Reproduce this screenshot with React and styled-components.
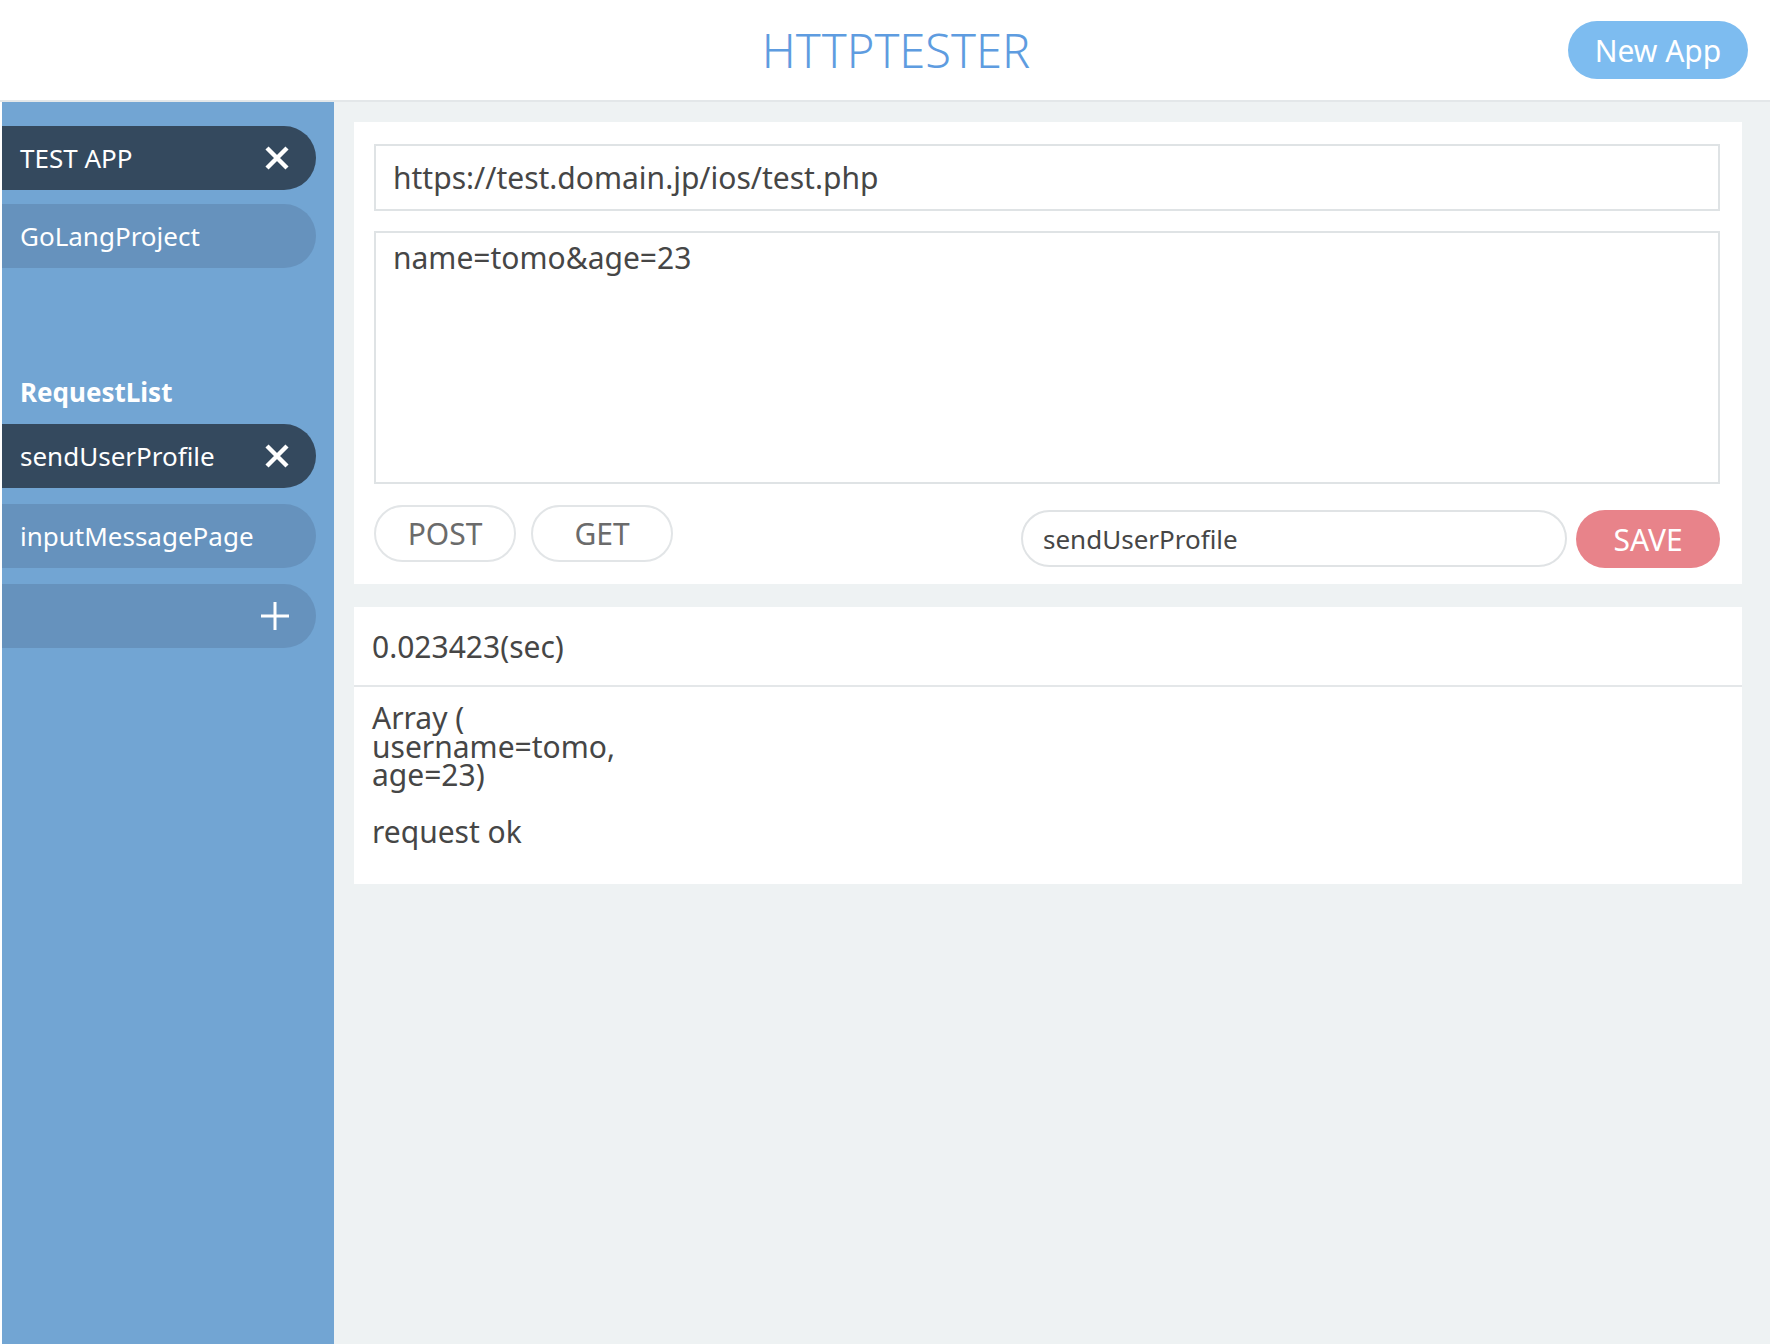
import React from 'react';
import styled, { createGlobalStyle } from 'styled-components';

const GlobalStyle = createGlobalStyle`
  * {
    box-sizing: border-box;
  }
  html,
  body {
    margin: 0;
    padding: 0;
  }
  body {
    font-family: "Noto Sans", "Noto Sans CJK JP", sans-serif;
    background: #fff;
    color: #464646;
  }
  button,
  input,
  textarea {
    font-family: inherit;
  }
`;

const apps = [
  { name: 'TEST APP', active: true },
  { name: 'GoLangProject', active: false },
];

const requests = [
  { name: 'sendUserProfile', active: true },
  { name: 'inputMessagePage', active: false },
];

const resultText = `Array (
username=tomo,
age=23)

request ok`;

const CloseIcon = () => (
  <svg width="26" height="26" viewBox="0 0 26 26">
    <path d="M3 3 L23 23 M23 3 L3 23" stroke="#fff" strokeWidth="4.4" fill="none" />
  </svg>
);

const PlusIcon = () => (
  <svg width="30" height="30" viewBox="0 0 30 30">
    <path d="M15 1 V29 M1 15 H29" stroke="#fff" strokeWidth="3" fill="none" />
  </svg>
);

const App = () => {
  return (
    <>
      <GlobalStyle />
      <Page>
        <Header>
          <Title>HTTPTESTER</Title>
          <NewAppButton>New App</NewAppButton>
        </Header>
        <Main>
          <Sidebar>
            <NavList $gap={14}>
              {apps.map((item) => (
                <Pill key={item.name} $active={item.active}>
                  <span>{item.name}</span>
                  {item.active && <CloseIcon />}
                </Pill>
              ))}
            </NavList>
            <SectionLabel>RequestList</SectionLabel>
            <NavList $gap={16}>
              {requests.map((item) => (
                <Pill key={item.name} $active={item.active}>
                  <span>{item.name}</span>
                  {item.active && <CloseIcon />}
                </Pill>
              ))}
              <AddPill>
                <PlusIcon />
              </AddPill>
            </NavList>
          </Sidebar>
          <Content>
            <EditorCard>
              <UrlInput readOnly defaultValue="https://test.domain.jp/ios/test.php" />
              <BodyArea readOnly defaultValue="name=tomo&age=23" />
              <ActionRow>
                <MethodButton>POST</MethodButton>
                <MethodButton>GET</MethodButton>
                <Spacer />
                <SaveGroup>
                  <NameInput readOnly defaultValue="sendUserProfile" />
                  <SaveButton>SAVE</SaveButton>
                </SaveGroup>
              </ActionRow>
            </EditorCard>
            <ResultCard>
              <TimeRow>0.023423(sec)</TimeRow>
              <ResultBody>{resultText}</ResultBody>
            </ResultCard>
          </Content>
        </Main>
      </Page>
    </>
  );
};
export default App;

const Page = styled.div`
  display: flex;
  flex-direction: column;
  height: 100vh;
`;

const Header = styled.header`
  display: grid;
  grid-template-columns: 1fr auto 1fr;
  align-items: center;
  height: 102px;
  padding: 0 22px;
  background: #fff;
  border-bottom: 2px solid #e3e7e9;
`;

const Title = styled.h1`
  grid-column: 2;
  margin: 0 0 0 22px;
  font-size: 47px;
  font-weight: 300;
  color: #5e9ce0;
  letter-spacing: 0;
`;

const NewAppButton = styled.button`
  justify-self: end;
  width: 180px;
  height: 58px;
  border: none;
  border-radius: 29px;
  background: #7dbcf0;
  color: #fff;
  font-size: 30px;
  padding: 0;
`;

const Main = styled.div`
  display: flex;
  flex: 1;
  min-height: 0;
  background: #fff;
`;

const Sidebar = styled.aside`
  display: flex;
  flex-direction: column;
  width: 332px;
  margin-left: 2px;
  padding: 24px 18px 0 0;
  background: #72a5d3;
`;

const NavList = styled.div`
  display: flex;
  flex-direction: column;
  gap: ${(p) => p.$gap}px;
`;

const Pill = styled.div`
  display: flex;
  align-items: center;
  justify-content: space-between;
  height: 64px;
  padding: 0 26px 0 18px;
  border-radius: 0 32px 32px 0;
  background: ${(p) => (p.$active ? '#34495e' : '#6692bd')};
  color: #fff;
  font-size: 26px;
`;

const AddPill = styled(Pill)`
  justify-content: flex-end;
`;

const SectionLabel = styled.div`
  margin: 106px 0 14px;
  padding-left: 18px;
  font-size: 26px;
  font-weight: 700;
  line-height: 36px;
  color: #fff;
`;

const Content = styled.main`
  display: flex;
  flex-direction: column;
  gap: 23px;
  flex: 1;
  padding: 20px 28px 20px 20px;
  background: #eef2f3;
`;

const EditorCard = styled.section`
  display: flex;
  flex-direction: column;
  gap: 20px;
  padding: 22px 22px 16px 20px;
  background: #fff;
`;

const UrlInput = styled.input`
  height: 67px;
  padding: 0 17px;
  border: 2px solid #dfe3e5;
  border-radius: 0;
  font-size: 30px;
  color: #464646;
  outline: none;
`;

const BodyArea = styled.textarea`
  height: 253px;
  padding: 5px 17px;
  border: 2px solid #dfe3e5;
  border-radius: 0;
  font-size: 30px;
  line-height: 1.36;
  color: #464646;
  resize: none;
  outline: none;
`;

const ActionRow = styled.div`
  display: flex;
  align-items: flex-start;
  margin-top: 1px;
`;

const MethodButton = styled.button`
  width: 142px;
  height: 57px;
  padding: 0;
  border: 2px solid #e2e5e7;
  border-radius: 29px;
  background: #fff;
  color: #6b6b6b;
  font-size: 30px;

  & + & {
    margin-left: 15px;
  }
`;

const Spacer = styled.div`
  flex: 1;
`;

const SaveGroup = styled.div`
  display: flex;
  gap: 9px;
  padding-top: 5px;
`;

const NameInput = styled.input`
  width: 546px;
  height: 57px;
  padding: 0 20px;
  border: 2px solid #e0e3e5;
  border-radius: 29px;
  font-size: 26px;
  color: #464646;
  outline: none;
`;

const SaveButton = styled.button`
  width: 144px;
  height: 58px;
  padding: 0;
  border: none;
  border-radius: 29px;
  background: #e8838a;
  color: #fff;
  font-size: 30px;
`;

const ResultCard = styled.section`
  background: #fff;
`;

const TimeRow = styled.div`
  display: flex;
  align-items: center;
  height: 80px;
  padding-left: 18px;
  border-bottom: 2px solid #e4e7e9;
  font-size: 30px;
  color: #464646;
`;

const ResultBody = styled.div`
  padding: 17px 18px 37px;
  font-size: 30px;
  line-height: 28.5px;
  white-space: pre-line;
  color: #464646;
`;
